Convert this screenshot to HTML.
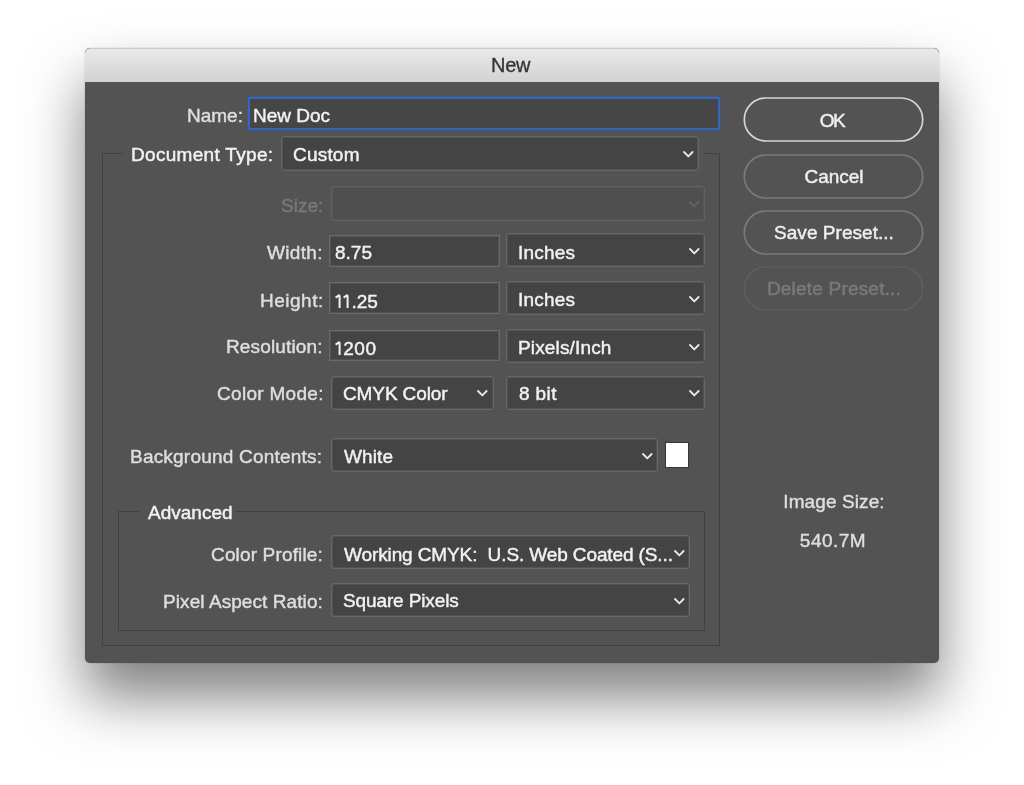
<!DOCTYPE html>
<html><head><meta charset="utf-8">
<style>
html,body{margin:0;padding:0;background:#fff;width:1024px;height:785px;overflow:hidden;}
*{box-sizing:border-box;}
body{font-family:"Liberation Sans",sans-serif;position:relative;}
.win{position:absolute;left:85px;top:48px;width:854px;height:615px;border-radius:5px;background:#535353;
 box-shadow:0 0 0 0.5px rgba(0,0,0,0.1),0 34px 58px 0 rgba(0,0,0,0.5);overflow:hidden;}
.title{position:absolute;left:0;top:0;width:854px;height:34px;background:linear-gradient(#e9e9e9,#d2d2d2);
 border-top:1px solid #cbcbcb;border-radius:5px 5px 0 0;}
.t{position:absolute;white-space:pre;font-size:19px;line-height:20px;will-change:transform;-webkit-text-stroke:0.45px currentColor;}
.ttl{color:#353535;-webkit-text-stroke:0.35px currentColor;}
.lab{color:#dedede;}
.val{color:#f2f2f2;}
.hdr{color:#f2f2f2;}
.dis{color:#787878;}
.fld{position:absolute;background:#444;border:1px solid #6a6a6a;box-shadow:inset 0 0 0 1px rgba(106,106,106,0.4);}
.fldname{position:absolute;background:#464646;border:2.5px solid #3467bb;box-shadow:0 0 0 0.5px #3c5f94;}
.dd{position:absolute;background:#444;border:1px solid #686868;border-radius:3px;box-shadow:inset 0 0 0 1px rgba(104,104,104,0.4);}
.dd.off{background:#4f4f4f;border-color:#626262;box-shadow:inset 0 0 0 1px rgba(98,98,98,0.4);}
.chev{position:absolute;}
.btnsvg{position:absolute;}
.one{vertical-align:0;}
.gline{position:absolute;background:#414141;}
.swatch{position:absolute;background:#fff;border:1px solid #363636;}
.btn{position:absolute;border-radius:23px;border:1px solid #7c7c7c;box-shadow:inset 0 0 0 1px rgba(124,124,124,0.45);}
.btn.ok{border:1px solid #dadada;box-shadow:inset 0 0 0 1px rgba(218,218,218,0.6);}
.btn.off{border-color:#5f5f5f;box-shadow:inset 0 0 0 1px rgba(95,95,95,0.45);}
.btxt{color:#efefef;}
.btxt.off{color:#7a7a7a;}
body.textonly > div:not(.t), body.textonly > svg{visibility:hidden;}
body.textonly > div.win{visibility:visible;box-shadow:none;}
</style></head><body>
<div class="win">
  <div class="title"></div>
</div>
<div class="fldname" style="left:248px;top:97px;width:472px;height:33px;"></div>
<div class="gline" style="left:102px;top:153px;width:21px;height:1px;"></div>
<div class="gline" style="left:704px;top:153px;width:16px;height:1px;"></div>
<div class="gline" style="left:102px;top:153px;width:1px;height:493px;"></div>
<div class="gline" style="left:719px;top:153px;width:1px;height:493px;"></div>
<div class="gline" style="left:102px;top:645px;width:618px;height:1px;"></div>
<div class="dd" style="left:281px;top:136px;width:418px;height:35px;"></div>
<svg class="chev" style="left:681.70px;top:149.80px;width:12.6px;height:8.4px" viewBox="0 0 12.6 8.4"><polyline points="2,2 6.3,6.4 10.6,2" fill="none" stroke="#e6e6e6" stroke-width="1.9" stroke-linecap="round" stroke-linejoin="round"/></svg>
<div class="dd off" style="left:331px;top:186px;width:374px;height:35px;"></div>
<svg class="chev" style="left:687.70px;top:199.80px;width:12.6px;height:8.4px" viewBox="0 0 12.6 8.4"><polyline points="2,2 6.3,6.4 10.6,2" fill="none" stroke="#626262" stroke-width="1.9" stroke-linecap="round" stroke-linejoin="round"/></svg>
<div class="fld" style="left:329px;top:235px;width:171px;height:32px;"></div>
<div class="dd" style="left:506px;top:233px;width:199px;height:34px;"></div>
<svg class="chev" style="left:687.70px;top:247.10px;width:12.6px;height:8.4px" viewBox="0 0 12.6 8.4"><polyline points="2,2 6.3,6.4 10.6,2" fill="none" stroke="#e6e6e6" stroke-width="1.9" stroke-linecap="round" stroke-linejoin="round"/></svg>
<div class="fld" style="left:329px;top:282px;width:171px;height:32px;"></div>
<div class="dd" style="left:506px;top:281px;width:199px;height:34px;"></div>
<svg class="chev" style="left:687.70px;top:295.10px;width:12.6px;height:8.4px" viewBox="0 0 12.6 8.4"><polyline points="2,2 6.3,6.4 10.6,2" fill="none" stroke="#e6e6e6" stroke-width="1.9" stroke-linecap="round" stroke-linejoin="round"/></svg>
<div class="fld" style="left:329px;top:330px;width:171px;height:31px;"></div>
<div class="dd" style="left:506px;top:329px;width:199px;height:34px;"></div>
<svg class="chev" style="left:687.70px;top:343.10px;width:12.6px;height:8.4px" viewBox="0 0 12.6 8.4"><polyline points="2,2 6.3,6.4 10.6,2" fill="none" stroke="#e6e6e6" stroke-width="1.9" stroke-linecap="round" stroke-linejoin="round"/></svg>
<div class="dd" style="left:331px;top:376px;width:163px;height:34px;"></div>
<svg class="chev" style="left:476.00px;top:389.30px;width:12.6px;height:8.4px" viewBox="0 0 12.6 8.4"><polyline points="2,2 6.3,6.4 10.6,2" fill="none" stroke="#e6e6e6" stroke-width="1.9" stroke-linecap="round" stroke-linejoin="round"/></svg>
<div class="dd" style="left:506px;top:376px;width:199px;height:34px;"></div>
<svg class="chev" style="left:687.70px;top:389.30px;width:12.6px;height:8.4px" viewBox="0 0 12.6 8.4"><polyline points="2,2 6.3,6.4 10.6,2" fill="none" stroke="#e6e6e6" stroke-width="1.9" stroke-linecap="round" stroke-linejoin="round"/></svg>
<div class="dd" style="left:331px;top:438px;width:327px;height:34px;"></div>
<svg class="chev" style="left:640.70px;top:451.50px;width:12.6px;height:8.4px" viewBox="0 0 12.6 8.4"><polyline points="2,2 6.3,6.4 10.6,2" fill="none" stroke="#e6e6e6" stroke-width="1.9" stroke-linecap="round" stroke-linejoin="round"/></svg>
<div class="swatch" style="left:665px;top:442px;width:24px;height:26px;"></div>
<div class="gline" style="left:118px;top:511px;width:21px;height:1px;"></div>
<div class="gline" style="left:235px;top:511px;width:470px;height:1px;"></div>
<div class="gline" style="left:118px;top:511px;width:1px;height:120px;"></div>
<div class="gline" style="left:704px;top:511px;width:1px;height:120px;"></div>
<div class="gline" style="left:118px;top:630px;width:587px;height:1px;"></div>
<div class="dd" style="left:331px;top:535px;width:359px;height:34px;"></div>
<svg class="chev" style="left:672.70px;top:548.80px;width:12.6px;height:8.4px" viewBox="0 0 12.6 8.4"><polyline points="2,2 6.3,6.4 10.6,2" fill="none" stroke="#e6e6e6" stroke-width="1.9" stroke-linecap="round" stroke-linejoin="round"/></svg>
<div class="dd" style="left:331px;top:583px;width:359px;height:34px;"></div>
<svg class="chev" style="left:672.70px;top:596.80px;width:12.6px;height:8.4px" viewBox="0 0 12.6 8.4"><polyline points="2,2 6.3,6.4 10.6,2" fill="none" stroke="#e6e6e6" stroke-width="1.9" stroke-linecap="round" stroke-linejoin="round"/></svg>
<svg class="btnsvg" style="left:740px;top:95.30px" width="188" height="50" viewBox="0 0 188 50"><rect x="4.3" y="3" width="178.4" height="43" rx="21.5" fill="none" stroke="#d6d6d6" stroke-width="1.7"/></svg>
<svg class="btnsvg" style="left:740px;top:151.60px" width="188" height="50" viewBox="0 0 188 50"><rect x="4.3" y="3" width="178.4" height="43" rx="21.5" fill="none" stroke="#7a7a7a" stroke-width="1.7"/></svg>
<svg class="btnsvg" style="left:740px;top:207.90px" width="188" height="50" viewBox="0 0 188 50"><rect x="4.3" y="3" width="178.4" height="43" rx="21.5" fill="none" stroke="#7a7a7a" stroke-width="1.7"/></svg>
<svg class="btnsvg" style="left:740px;top:264.20px" width="188" height="50" viewBox="0 0 188 50"><rect x="4.3" y="3" width="178.4" height="43" rx="21.5" fill="none" stroke="#5e5e5e" stroke-width="1.7"/></svg>
<div class="t ttl" id="t_new" style="left:490.50px;top:55.43px;font-size:20px;letter-spacing:-0.250px;">New</div>
<div class="t lab" id="l_name" style="right:781.55px;text-align:right;top:105.80px;font-size:19px;letter-spacing:-0.005px;">Name:</div>
<div class="t val" id="v_name" style="left:252.50px;top:106.30px;font-size:19px;letter-spacing:0.000px;">New Doc</div>
<div class="t hdr" id="l_doctype" style="right:750.22px;text-align:right;top:145.40px;font-size:19px;letter-spacing:0.311px;">Document Type:</div>
<div class="t val" id="v_doctype" style="left:292.50px;top:145.40px;font-size:19px;letter-spacing:0.200px;">Custom</div>
<div class="t dis" id="l_size" style="right:701.00px;text-align:right;top:195.50px;font-size:19px;letter-spacing:0.000px;">Size:</div>
<div class="t lab" id="l_r0" style="right:700.66px;text-align:right;top:242.85px;font-size:19px;letter-spacing:0.340px;">Width:</div>
<div class="t val" id="v_r0" style="left:334.50px;top:242.70px;font-size:19px;letter-spacing:-0.000px;">8.75</div>
<div class="t val" id="u_r0" style="left:517.50px;top:242.95px;font-size:19px;letter-spacing:0.200px;">Inches</div>
<div class="t lab" id="l_r1" style="right:700.01px;text-align:right;top:290.50px;font-size:19px;letter-spacing:0.499px;">Height:</div>
<div class="t val" id="v_r1" style="left:334.50px;top:291.55px;font-size:19px;letter-spacing:0.075px;"><svg class="one" width="8.2" height="14" viewBox="0 0 8.2 14"><path d="M4.6 14V1.2M4.7 0.9L0.6 3.6" stroke="currentColor" stroke-width="2" fill="none"/></svg><svg class="one" width="8.2" height="14" viewBox="0 0 8.2 14"><path d="M4.6 14V1.2M4.7 0.9L0.6 3.6" stroke="currentColor" stroke-width="2" fill="none"/></svg>.25</div>
<div class="t val" id="u_r1" style="left:517.50px;top:290.30px;font-size:19px;letter-spacing:0.200px;">Inches</div>
<div class="t lab" id="l_r2" style="right:700.85px;text-align:right;top:337.40px;font-size:19px;letter-spacing:0.150px;">Resolution:</div>
<div class="t val" id="v_r2" style="left:334.50px;top:338.70px;font-size:19px;letter-spacing:0.601px;"><svg class="one" width="8.2" height="14" viewBox="0 0 8.2 14"><path d="M4.6 14V1.2M4.7 0.9L0.6 3.6" stroke="currentColor" stroke-width="2" fill="none"/></svg>200</div>
<div class="t val" id="u_r2" style="left:517.50px;top:337.60px;font-size:19px;letter-spacing:0.150px;">Pixels/Inch</div>
<div class="t lab" id="l_mode" style="right:700.70px;text-align:right;top:384.20px;font-size:19px;letter-spacing:0.300px;">Color Mode:</div>
<div class="t val" id="v_mode" style="left:342.50px;top:384.25px;font-size:19px;letter-spacing:-0.110px;">CMYK Color</div>
<div class="t val" id="v_bits" style="left:518.50px;top:384.10px;font-size:19px;letter-spacing:0.375px;">8 bit</div>
<div class="t lab" id="l_bg" style="right:701.30px;text-align:right;top:446.85px;font-size:19px;letter-spacing:0.210px;">Background Contents:</div>
<div class="t val" id="v_bg" style="left:343.50px;top:446.95px;font-size:19px;letter-spacing:0.120px;">White</div>
<div class="t hdr" id="l_adv" style="left:147.50px;top:503.40px;font-size:19px;letter-spacing:0.001px;">Advanced</div>
<div class="t lab" id="l_prof" style="right:701.38px;text-align:right;top:544.60px;font-size:19px;letter-spacing:0.155px;">Color Profile:</div>
<div class="t val" id="v_prof" style="left:343.50px;top:544.61px;font-size:19px;letter-spacing:-0.115px;">Working CMYK:  U.S. Web Coated (S...</div>
<div class="t lab" id="l_par" style="right:701.41px;text-align:right;top:591.50px;font-size:19px;letter-spacing:0.080px;">Pixel Aspect Ratio:</div>
<div class="t val" id="v_par" style="left:342.50px;top:591.30px;font-size:19px;letter-spacing:-0.124px;">Square Pixels</div>
<div class="t btxt ok" id="b0" style="left:736.50px;width:190px;text-align:center;top:110.70px;font-size:19px;letter-spacing:-1.500px;">OK</div>
<div class="t btxt " id="b1" style="left:738.50px;width:190px;text-align:center;top:166.50px;font-size:19px;letter-spacing:0.000px;">Cancel</div>
<div class="t btxt " id="b2" style="left:738.78px;width:190px;text-align:center;top:223.30px;font-size:19px;letter-spacing:0.041px;">Save Preset...</div>
<div class="t btxt off" id="b3" style="left:738.63px;width:190px;text-align:center;top:278.60px;font-size:19px;letter-spacing:0.197px;">Delete Preset...</div>
<div class="t lab" id="l_isz" style="left:738.55px;width:190px;text-align:center;top:492.40px;font-size:19px;letter-spacing:0.100px;">Image Size:</div>
<div class="t lab" id="v_isz" style="left:737.50px;width:190px;text-align:center;top:530.80px;font-size:19px;letter-spacing:0.500px;">540.7M</div>
</body></html>
